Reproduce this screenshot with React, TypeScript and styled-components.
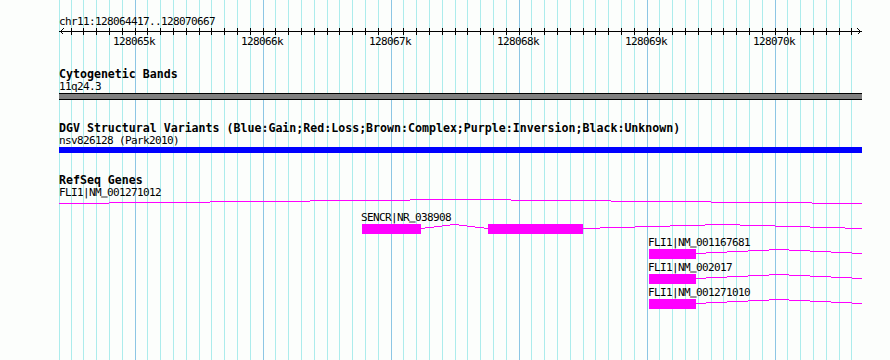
import React from "react";
import styled, { createGlobalStyle } from "styled-components";

const GlobalStyle = createGlobalStyle`
  html, body {
    margin: 0;
    padding: 0;
    background: #fcfefc;
  }
`;

const TRACK_LEFT = 59;
const TRACK_RIGHT = 862;
const MONO = `"DejaVu Sans Mono", "Liberation Mono", monospace`;

// grid lines every 100bp (12.8px), major every 1kb
const gridLines: { x: number; major: boolean }[] = [{ x: TRACK_LEFT, major: false }];
for (let k = -5; k <= 56; k++) {
  gridLines.push({ x: Math.floor(135 + (128 * k) / 10 + 1e-6), major: k % 10 === 0 });
}

const majorTicks = [
  { x: 135, label: "128065k" },
  { x: 263, label: "128066k" },
  { x: 391, label: "128067k" },
  { x: 519, label: "128068k" },
  { x: 647, label: "128069k" },
  { x: 775, label: "128070k" },
];

type Gene = {
  label: string;
  labelX: number;
  exons: [number, number][];
  introns: [number, number][];
};

const genes: Gene[] = [
  { label: "FLI1|NM_001271012", labelX: 59, exons: [], introns: [[59, TRACK_RIGHT]] },
  {
    label: "SENCR|NR_038908",
    labelX: 361,
    exons: [
      [362, 421],
      [488, 583],
    ],
    introns: [
      [421, 488],
      [583, TRACK_RIGHT],
    ],
  },
  { label: "FLI1|NM_001167681", labelX: 648, exons: [[649, 696]], introns: [[696, TRACK_RIGHT]] },
  { label: "FLI1|NM_002017", labelX: 648, exons: [[649, 696]], introns: [[696, TRACK_RIGHT]] },
  { label: "FLI1|NM_001271010", labelX: 648, exons: [[649, 696]], introns: [[696, TRACK_RIGHT]] },
];

// intron connector: a shallow hat drawn in 1px steps
function hatRuns(x1: number, x2: number, base = 4, rise = 4) {
  const mid = (x1 + x2) / 2;
  const half = (x2 - x1) / 2;
  const runs: { x: number; w: number; y: number }[] = [];
  for (let x = x1; x < x2; x++) {
    const t = 1 - Math.abs(x + 0.5 - mid) / half;
    const y = base - Math.round(rise * t);
    const last = runs[runs.length - 1];
    if (last && last.y === y) last.w++;
    else runs.push({ x, w: 1, y });
  }
  return runs;
}

const Panel = styled.div`
  position: relative;
  width: 890px;
  height: 360px;
  overflow: hidden;
  background: #fcfefc;
  color: #000;
`;

const GridLayer = styled.svg`
  position: absolute;
  top: 0;
  left: 0;
  display: block;
`;

const Content = styled.div`
  position: relative;
  z-index: 1;
`;

const smallText = `
  font: 11px/13px ${MONO};
  letter-spacing: -0.62px;
  white-space: pre;
`;

const RangeLabel = styled.div`
  padding: 15px 0 0 59px;
  height: 13px;
  ${smallText}
`;

const Axis = styled.svg`
  display: block;
`;

const TickLabels = styled.div`
  position: relative;
  height: 13px;
`;

const TickLabel = styled.span`
  position: absolute;
  top: 0;
  ${smallText}
`;

const Track = styled.section<{ $gap: number }>`
  margin-top: ${(p) => p.$gap}px;
`;

const TrackTitle = styled.div`
  padding-left: 59px;
  font: bold 11.6px/12px ${MONO};
  white-space: pre;
`;

const FeatureName = styled.div<{ $x: number }>`
  padding-left: ${(p) => p.$x}px;
  height: 13px;
  ${smallText}
`;

// the bitmap font sits its underscore on the baseline row
const Under = styled.span`
  position: relative;
  top: -2.5px;
  text-shadow: 0 0.5px 0 currentColor;
`;

const Name: React.FC<{ text: string }> = ({ text }) => (
  <>
    {text.split(/(_)/).map((part, i) => (part === "_" ? <Under key={i}>_</Under> : part))}
  </>
);

const SolidBar = styled.div<{ $fill: string; $h: number; $edge?: boolean }>`
  margin-left: ${TRACK_LEFT}px;
  width: ${TRACK_RIGHT - TRACK_LEFT}px;
  height: ${(p) => p.$h}px;
  box-sizing: border-box;
  background: ${(p) => p.$fill};
  border-top: ${(p) => (p.$edge ? "1px solid #000" : "none")};
  border-bottom: ${(p) => (p.$edge ? "1px solid #000" : "none")};
`;

const GeneRow = styled.div`
  height: 25px;
`;

const Glyph = styled.svg`
  display: block;
`;

const GeneGlyph: React.FC<{ gene: Gene }> = ({ gene }) => (
  <GeneRow>
    <FeatureName $x={gene.labelX}>
      <Name text={gene.label} />
    </FeatureName>
    <Glyph width={890} height={10} shapeRendering="crispEdges">
      {gene.introns.map(([a, b]) =>
        hatRuns(a, b).map((r) => (
          <rect key={`${a}-${r.x}`} x={r.x} y={r.y} width={r.w} height={1} fill="#ff00ff" />
        ))
      )}
      {gene.exons.map(([a, b]) => (
        <rect key={a} x={a} y={0} width={b - a} height={10} fill="#ff00ff" />
      ))}
    </Glyph>
  </GeneRow>
);

export default function App() {
  return (
    <Panel>
      <GlobalStyle />
      <GridLayer width={890} height={360} shapeRendering="crispEdges">
        {gridLines.map((g) => (
          <rect
            key={g.x}
            x={g.x}
            y={0}
            width={1}
            height={360}
            fill={g.major ? "#8cc6e4" : "#acecec"}
          />
        ))}
      </GridLayer>
      <Content>
        <RangeLabel>chr11:128064417..128070667</RangeLabel>
        <Axis width={890} height={7} shapeRendering="crispEdges">
          <rect x={TRACK_LEFT} y={3} width={TRACK_RIGHT - TRACK_LEFT} height={1} fill="#000" />
          {gridLines.slice(1).map((g) => (
            <rect key={g.x} x={g.x} y={0} width={1} height={7} fill="#000" />
          ))}
          <path d="M63.5,0.5 L60.5,3.5 L63.5,6.5" fill="none" stroke="#000" strokeWidth={1} />
          <path d="M857.5,0.5 L860.5,3.5 L857.5,6.5" fill="none" stroke="#000" strokeWidth={1} />
        </Axis>
        <TickLabels>
          {majorTicks.map((t) => (
            <TickLabel key={t.x} style={{ left: t.x - 22 }}>
              {t.label}
            </TickLabel>
          ))}
        </TickLabels>

        <Track $gap={20}>
          <TrackTitle>Cytogenetic Bands</TrackTitle>
          <FeatureName $x={59}>11q24.3</FeatureName>
          <SolidBar $fill="#808080" $h={7} $edge />
        </Track>

        <Track $gap={22}>
          <TrackTitle>
            DGV Structural Variants (Blue:Gain;Red:Loss;Brown:Complex;Purple:Inversion;Black:Unknown)
          </TrackTitle>
          <FeatureName $x={59}>nsv826128 (Park2010)</FeatureName>
          <SolidBar $fill="#0000ff" $h={6} />
        </Track>

        <Track $gap={21}>
          <TrackTitle>RefSeq Genes</TrackTitle>
          {genes.map((g) => (
            <GeneGlyph key={g.label} gene={g} />
          ))}
        </Track>
      </Content>
    </Panel>
  );
}
